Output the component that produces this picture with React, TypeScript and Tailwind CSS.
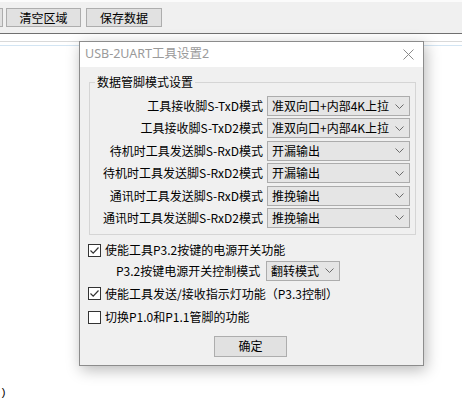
import React from "react";

// 通用字体：中文用 Noto Sans CJK SC，字号 12px
const cjk = "font-['Noto_Sans_CJK_SC','Noto_Sans',sans-serif]";

const pinRows = [
  { label: "工具接收脚S-TxD模式", value: "准双向口+内部4K上拉" },
  { label: "工具接收脚S-TxD2模式", value: "准双向口+内部4K上拉" },
  { label: "待机时工具发送脚S-RxD模式", value: "开漏输出" },
  { label: "待机时工具发送脚S-RxD2模式", value: "开漏输出" },
  { label: "通讯时工具发送脚S-RxD模式", value: "推挽输出" },
  { label: "通讯时工具发送脚S-RxD2模式", value: "推挽输出" },
];

// 下拉框的小箭头
const Chevron = () => (
  <svg width="9" height="5" viewBox="0 0 9 5" className="shrink-0">
    <path d="M0.5 0.5 L4.5 4.5 L8.5 0.5" fill="none" stroke="#6b6b6b" strokeWidth="1" />
  </svg>
);

const Combo = ({ value, width }: { value: string; width: string }) => (
  <div
    className={`${width} h-[20px] flex items-center justify-between pl-[4px] pr-[5px] bg-[#e5e5e5] border border-[#acacac] text-[12px] leading-none text-black`}
  >
    <span className="whitespace-nowrap">{value}</span>
    <Chevron />
  </div>
);

const CheckBox = ({ checked, label }: { checked: boolean; label: string }) => (
  <div className="flex items-center gap-[4px]">
    <div className="w-[13px] h-[13px] border border-[#333] bg-white flex items-center justify-center">
      {checked && (
        <svg width="11" height="11" viewBox="0 0 11 11">
          <path d="M1.5 5.5 L4.2 8.2 L9.5 2.5" fill="none" stroke="#333" strokeWidth="1.2" />
        </svg>
      )}
    </div>
    <span className="text-[12px] leading-none whitespace-nowrap">{label}</span>
  </div>
);

const ToolButton = ({ text, width }: { text: string; width: string }) => (
  <div
    className={`${width} h-[19px] flex items-center justify-center bg-[#e1e1e1] border border-[#adadad] text-[12px] leading-none text-black`}
  >
    {text}
  </div>
);

export default function App() {
  return (
    <div className={`relative w-[462px] h-[407px] bg-white overflow-hidden ${cjk}`}>
      {/* 主窗口工具栏 */}
      <div className="h-[34px] bg-[#f0f0f0] border-t-2 border-[#fbfbfb] border-b border-b-[#707070] flex items-start pt-[6px] gap-[5px]">
        <div className="w-[3px] h-[19px] bg-[#e1e1e1] border border-l-0 border-[#adadad] mr-[-2px]" />
        <ToolButton text="清空区域" width="w-[75px]" />
        <ToolButton text="保存数据" width="w-[76px]" />
      </div>

      {/* 接收区文本框 */}
      <div className="h-[373px] flex flex-col">
        <div className="mt-[7px] border-t border-[#d9d9d9]" />
        <div className="mt-[3px] border-t border-[#d3e5f3]" />
        <div className="flex-1 flex items-end pb-[8px]">
          <span className="text-[11px] leading-none font-['Liberation_Mono',monospace]">)</span>
        </div>
      </div>

      {/* 设置对话框 */}
      <div className="absolute left-[79px] top-[41px] w-[345px] h-[325px] border border-[#8c8c8c] bg-[#f0f0f0] shadow-[2px_4px_14px_rgba(0,0,0,0.28)] flex flex-col">
        <div className="h-[25px] bg-white flex items-center justify-between pl-[5px] pr-[9px]">
          <span className="text-[12.5px] leading-none text-[#9a9a9a] font-['Noto_Sans','Noto_Sans_CJK_SC',sans-serif]">
            USB-2UART工具设置2
          </span>
          <svg width="11" height="11" viewBox="0 0 11 11">
            <path d="M0.5 0.5 L10.5 10.5 M10.5 0.5 L0.5 10.5" stroke="#8a8a8a" strokeWidth="1" />
          </svg>
        </div>

        <div className="flex-1 flex flex-col text-black">
          <fieldset className="ml-[9px] mr-[7px] mt-[9px] border border-[#d5d5d5] pt-[8px] pb-[6px] pr-[5px]">
            <legend className="ml-[5px] px-[2px] text-[12px] leading-[12px]">数据管脚模式设置</legend>
            <div className="grid grid-cols-[1fr_143px] gap-x-[4px] gap-y-[2.4px]">
              {pinRows.map((row) => (
                <React.Fragment key={row.label}>
                  <div className="h-[20px] flex items-center justify-end text-[12px] leading-none whitespace-nowrap">
                    {row.label}
                  </div>
                  <Combo value={row.value} width="w-[143px]" />
                </React.Fragment>
              ))}
            </div>
          </fieldset>

          <div className="flex flex-col pl-[8px] pt-[6px]">
            <div className="h-[19px] flex items-center">
              <CheckBox checked label="使能工具P3.2按键的电源开关功能" />
            </div>
            <div className="h-[22px] flex items-center pl-[28px]">
              <span className="w-[150px] text-[12px] leading-none whitespace-nowrap">P3.2按键电源开关控制模式</span>
              <Combo value="翻转模式" width="w-[74px]" />
            </div>
            <div className="h-[24px] flex items-center">
              <CheckBox checked label="使能工具发送/接收指示灯功能（P3.3控制）" />
            </div>
            <div className="h-[23px] flex items-center">
              <CheckBox checked={false} label="切换P1.0和P1.1管脚的功能" />
            </div>
          </div>

          <div className="flex justify-center mt-[7px] pr-[2px]">
            <div className="w-[73px] h-[21px] flex items-center justify-center bg-[#e1e1e1] border border-[#adadad] text-[12px] leading-none">
              确定
            </div>
          </div>
        </div>
      </div>
    </div>
  );
}
